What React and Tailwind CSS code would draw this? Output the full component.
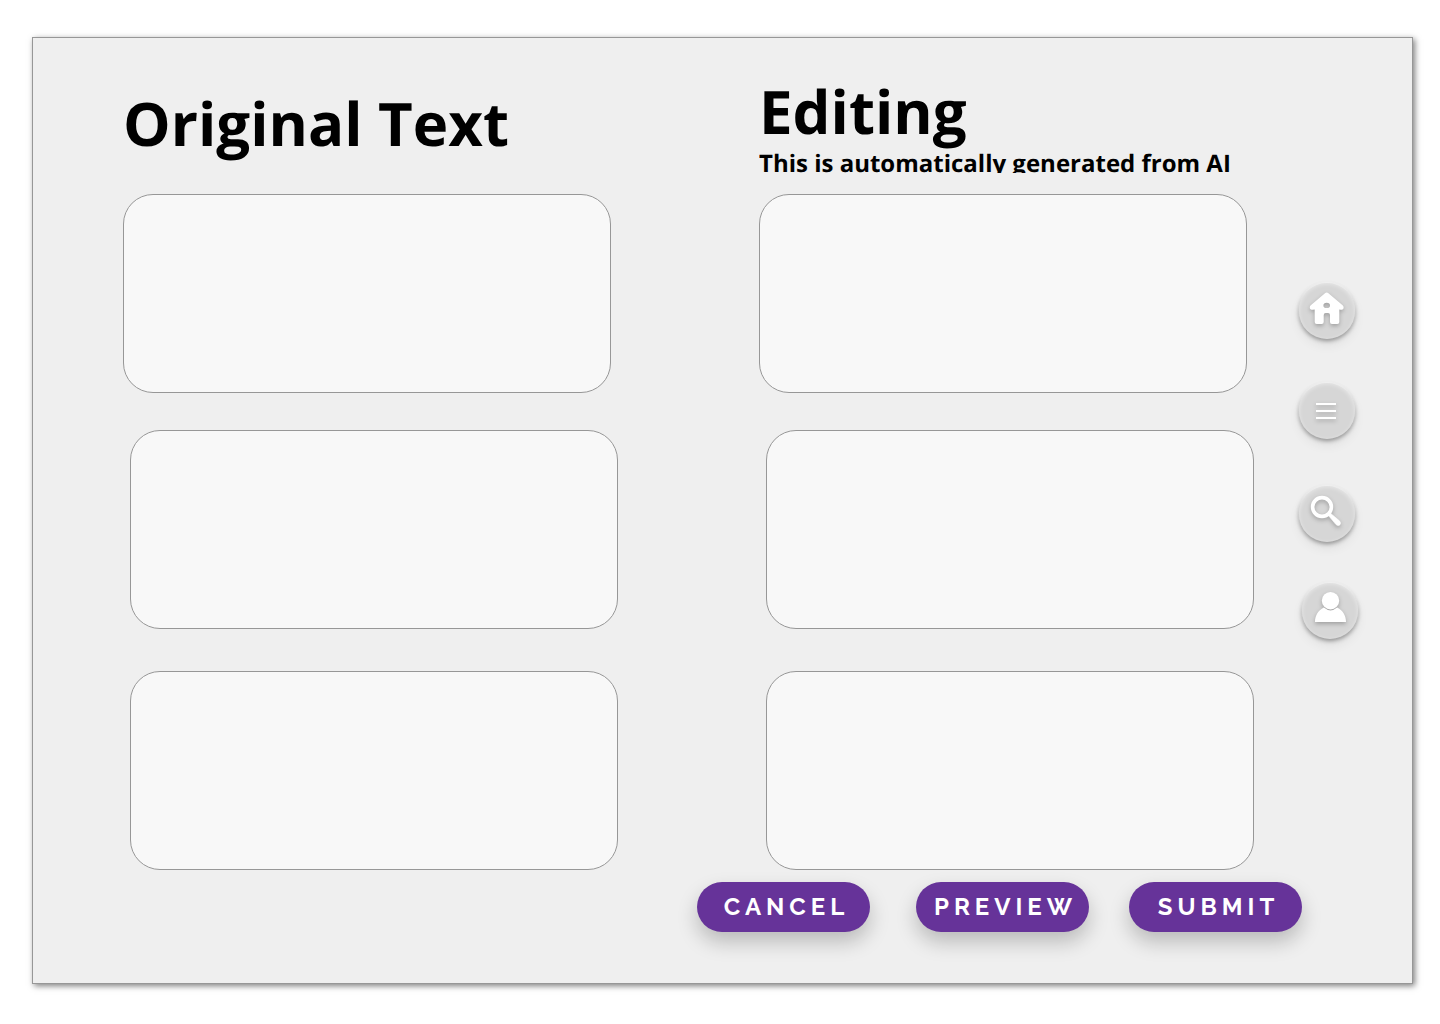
const SHAPES = {
  home: (
    <path
      fillRule="evenodd"
      d="M26 10.2Q27.7 8.8 29.4 10.2L43.6 22.2Q45.2 23.8 44.3 25.8Q43.6 27 42 26.8L40.3 26.6V39Q40.3 41 38.3 41H33Q31 41 31 39V32Q31 30 29 30H26.7Q24.7 30 24.7 32V39Q24.7 41 22.7 41H17.7Q15.7 41 15.7 39V26.6L13.4 26.8Q11.8 27 11.1 25.8Q10.2 23.8 11.8 22.2ZM27.7 19.8A3.3 2.6 0 1 0 27.7 25A3.3 2.6 0 1 0 27.7 19.8Z"
    />
  ),
  menu: <path d="M17 20H37V22H17ZM17 27H37V29H17ZM17 34H37V36H17Z" />,
  search: (
    <>
      <circle cx="23" cy="21" r="9.4" fill="none" stroke="white" strokeWidth="3.6" />
      <path
        d="M29.3 29.3L31.4 27.2L40.4 34.8Q42.4 37.2 40.8 38.9Q39 40.4 37 38.6Z"
        stroke="white"
        strokeWidth="0.6"
        strokeLinejoin="round"
      />
    </>
  ),
  user: (
    <>
      <circle cx="28.5" cy="17.7" r="8.7" />
      <path d="M21.8 24.6Q28.5 30.2 35.2 24.6C40.6 27.4 44 32.6 44 39H13C13 32.6 16.4 27.4 21.8 24.6Z" />
    </>
  ),
};

function NavButton({ label, shape, className = "" }) {
  return (
    <button
      type="button"
      aria-label={label}
      className={`size-14 rounded-full bg-[#d6d6d6] shadow-[0_-1px_2px_rgba(255,255,255,0.6),0_2px_4px_rgba(0,0,0,0.36),0_6px_12px_rgba(0,0,0,0.07),inset_0_1px_4px_rgba(255,255,255,0.45)] ${className}`}
    >
      <svg viewBox="0 0 56 56" fill="white" className="size-14 drop-shadow-[0_2px_2px_rgba(0,0,0,0.25)]">
        {SHAPES[shape]}
      </svg>
    </button>
  );
}

function TextPanel({ label, className }) {
  return (
    <div className={className}>
      <textarea
        aria-label={label}
        className="block h-[199px] w-full resize-none rounded-[30px] border border-[#979797] bg-[#f8f8f8] px-6 py-5 text-base outline-none"
      />
    </div>
  );
}

function Panels({ name }) {
  return (
    <>
      <TextPanel label={`${name} 1`} className="pr-[7px]" />
      <TextPanel label={`${name} 2`} className="mt-[37px] pl-[7px]" />
      <TextPanel label={`${name} 3`} className="mt-[42px] pl-[7px]" />
    </>
  );
}

function ActionButton({ children, className = "" }) {
  return (
    <button
      type="button"
      className={`h-[50px] w-[173px] rounded-full bg-[#663399] pl-1.5 text-center font-['Raleway',Lato,sans-serif] text-2xl font-bold tracking-[5px] text-white shadow-[0_10px_20px_rgba(0,0,0,0.22)] ${className}`}
    >
      {children}
    </button>
  );
}

export default function App() {
  return (
    <div className="flex min-h-screen bg-white pt-[37px] pr-[27px] pb-10 pl-8 font-['Open_Sans',sans-serif] text-black [text-rendering:geometricPrecision]">
      <main className="flex flex-1 flex-col border border-[#979797] bg-[#efefef] shadow-[2px_2px_6px_rgba(0,0,0,0.5)]">
        <div className="flex pl-[90px]">
          <div className="grid flex-1 grid-cols-2 gap-[141px]">
            <section>
              <header className="h-[156px] pt-[55px]">
                <h1 className="text-6xl leading-[60px] font-bold whitespace-nowrap">Original Text</h1>
              </header>
              <Panels name="Original text" />
            </section>
            <section>
              <header className="h-[156px] pt-[43px]">
                <h1 className="text-6xl leading-[60px] font-bold">Editing</h1>
                <p className="mt-[5px] h-[27px] overflow-hidden text-2xl leading-[35px] font-bold whitespace-nowrap">
                  This is automatically generated from AI
                </p>
              </header>
              <Panels name="Edited text" />
            </section>
          </div>
          <nav className="flex w-[158px] flex-col pt-[245px] pl-[45px]">
            <NavButton label="Home" shape="home" />
            <NavButton label="Menu" shape="menu" className="mt-11" />
            <NavButton label="Search" shape="search" className="mt-[47px]" />
            <NavButton label="Profile" shape="user" className="mt-[41px] ml-[3px]" />
          </nav>
        </div>
        <footer className="mt-3 flex justify-end pr-[110px] pb-12">
          <ActionButton>CANCEL</ActionButton>
          <ActionButton className="ml-[46px]">PREVIEW</ActionButton>
          <ActionButton className="ml-10">SUBMIT</ActionButton>
        </footer>
      </main>
    </div>
  );
}
